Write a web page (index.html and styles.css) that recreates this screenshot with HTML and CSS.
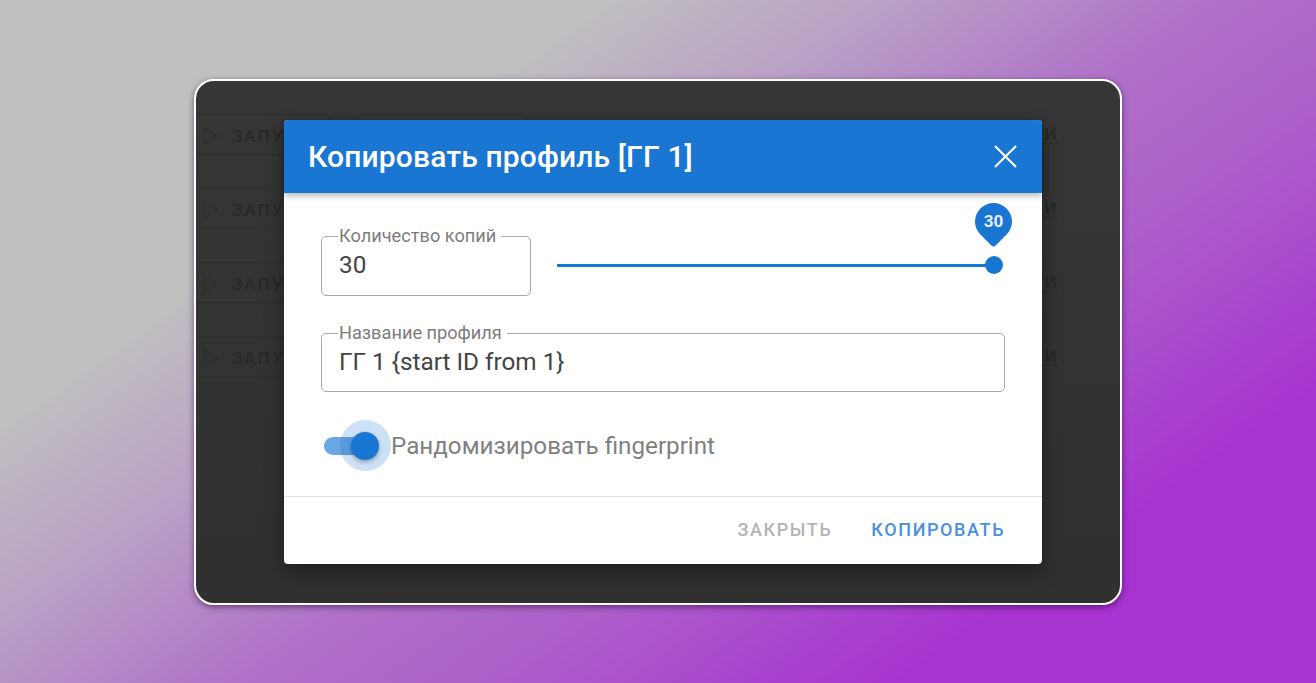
FILE: index.html
```html
<!DOCTYPE html>
<html lang="ru">
<head>
<meta charset="utf-8">
<title>Копировать профиль</title>
<link rel="stylesheet" href="styles.css">
</head>
<body>
<main class="window">
  <div class="rows">
    <div class="row"><div class="run"><svg class="play" viewBox="0 0 16 18"><path d="M1.5 1.5 L14.5 9 L1.5 16.5 Z"/></svg><span>ЗАПУ</span></div><div class="ghost"></div><span class="more">ТИ</span></div>
    <div class="row"><div class="run"><svg class="play" viewBox="0 0 16 18"><path d="M1.5 1.5 L14.5 9 L1.5 16.5 Z"/></svg><span>ЗАПУ</span></div><div class="ghost"></div><span class="more">ТИ</span></div>
    <div class="row"><div class="run"><svg class="play" viewBox="0 0 16 18"><path d="M1.5 1.5 L14.5 9 L1.5 16.5 Z"/></svg><span>ЗАПУ</span></div><div class="ghost"></div><span class="more">ТИ</span></div>
    <div class="row"><div class="run"><svg class="play" viewBox="0 0 16 18"><path d="M1.5 1.5 L14.5 9 L1.5 16.5 Z"/></svg><span>ЗАПУ</span></div><div class="ghost"></div><span class="more">ТИ</span></div>
  </div>
  <section class="dialog">
    <header class="dialog-head">
      <h1>Копировать профиль [ГГ 1]</h1>
      <svg class="close" viewBox="0 0 24 24"><path d="M1 1 L23 23 M23 1 L1 23"/></svg>
    </header>
    <div class="dialog-body">
      <div class="line">
        <fieldset class="field field-count">
          <legend>Количество копий</legend>
          <div class="value">30</div>
        </fieldset>
        <div class="slider">
          <div class="track"></div>
          <div class="thumb"></div>
          <div class="pin"><span>30</span></div>
        </div>
      </div>
      <fieldset class="field field-name">
        <legend>Название профиля</legend>
        <div class="value">ГГ 1 {start ID from 1}</div>
      </fieldset>
      <div class="toggle-line">
        <div class="toggle"><div class="toggle-track"></div><div class="toggle-halo"></div><div class="toggle-knob"></div></div>
        <span class="toggle-label">Рандомизировать fingerprint</span>
      </div>
    </div>
    <footer class="dialog-foot">
      <span class="btn btn-close">ЗАКРЫТЬ</span>
      <span class="btn btn-copy">КОПИРОВАТЬ</span>
    </footer>
  </section>
</main>
</body>
</html>
```
FILE: styles.css
```css
* { box-sizing: border-box; }
html, body { height: 100%; }
body {
  margin: 0;
  display: flex;
  align-items: center;
  justify-content: center;
  background: linear-gradient(145deg, #c0c0c0 26%, #b9a0c6 39%, #b071c8 53%, #ad5fca 64%, #a733d0 82%);
  font-family: Roboto, "Noto Sans", sans-serif;
  overflow: hidden;
}
.window {
  position: relative;
  width: 928px;
  height: 526px;
  margin-top: 1px;
  border: 2px solid #fff;
  border-radius: 20px;
  background: linear-gradient(#363636, #303030);
  box-shadow: 0 2px 6px rgba(40, 0, 60, .55);
  overflow: hidden;
}
.rows {
  display: flex;
  flex-direction: column;
  padding-top: 33px;
}
.row {
  display: flex;
  align-items: center;
  height: 74px;
  padding-bottom: 33px;
  flex: none;
}
.run {
  width: 142px;
  height: 41px;
  margin-left: -7px;
  display: flex;
  align-items: center;
  gap: 13px;
  padding: 2px 0 0 13px;
  flex: none;
  border: 1px solid #2b302b;
  border-radius: 5px;
  color: #262b26;
  font-size: 17px;
  font-weight: 500;
  letter-spacing: 2px;
  white-space: nowrap;
}
.play { width: 16px; height: 18px; flex: none; fill: none; stroke: #2b302b; stroke-width: 1.4; }
.ghost {
  width: 171px;
  height: 41px;
  margin-left: 25px;
  flex: none;
  border: 1px solid #2d312d;
  border-radius: 5px;
}
.more {
  margin-left: auto;
  margin-right: 62px;
  color: #272a27;
  font-size: 17px;
  font-weight: 500;
  letter-spacing: 1.5px;
  line-height: 18px;
  border-bottom: 1px dashed #272a27;
}
.dialog {
  position: absolute;
  left: 88px;
  top: 39px;
  width: 758px;
  height: 444px;
  display: flex;
  flex-direction: column;
  background: #fff;
  border-radius: 4px;
  box-shadow: 0 8px 20px rgba(0, 0, 0, .4);
}
.dialog-head {
  height: 73px;
  flex: none;
  display: flex;
  align-items: center;
  justify-content: space-between;
  padding: 0 25px 0 24px;
  background: #1976d2;
  border-radius: 4px 4px 0 0;
  box-shadow: 0 3px 6px rgba(0, 0, 0, .28);
  position: relative;
}
.dialog-head h1 {
  margin: 0;
  color: #fff;
  font-size: 30px;
  font-weight: 500;
  letter-spacing: .14px;
}
.close { width: 23px; height: 23px; stroke: #fff; stroke-width: 2.2; fill: none; }
.dialog-body {
  flex: 1;
  padding: 34px 37px 0;
  display: flex;
  flex-direction: column;
}
.line { display: flex; gap: 26px; height: 69px; flex: none; }
.field {
  margin: 0;
  padding: 0 8px 0 17px;
  border: 1px solid #a8a8a8;
  border-radius: 5px;
  min-width: 0;
  display: block;
}
.field legend {
  padding: 0 5px 0 1px;
  margin-left: -1px;
  font-size: 18.2px;
  line-height: 18px;
  color: #7d7d7d;
}
.value {
  font-size: 24.3px;
  line-height: 30px;
  color: #444;
  margin-top: 5px;
}
.field-count { width: 210px; height: 69px; flex: none; }
.slider { position: relative; flex: 1; margin-right: 2px; }
.track {
  position: absolute;
  left: 0;
  right: 9px;
  top: 37px;
  height: 3px;
  background: #1976d2;
}
.thumb {
  position: absolute;
  right: 0;
  top: 29px;
  width: 18px;
  height: 18px;
  border-radius: 50%;
  background: #1976d2;
}
.pin {
  position: absolute;
  right: -9px;
  top: -24px;
  width: 37px;
  height: 44px;
}
.pin::before {
  content: "";
  position: absolute;
  left: 0;
  top: 0;
  width: 37px;
  height: 37px;
  border-radius: 50% 50% 3px 50%;
  background: #1976d2;
  transform: rotate(45deg);
  transform-origin: 50% 50%;
}
.pin span {
  position: absolute;
  left: 0;
  right: 0;
  top: 7px;
  text-align: center;
  color: #e3eefa;
  font-size: 17px;
  line-height: 22px;
  font-weight: 700;
}
.field-name { height: 68px; margin-top: 28px; width: 684px; flex: none; }
.toggle-line { display: flex; align-items: center; margin-top: 22px; height: 60px; flex: none; }
.toggle { position: relative; width: 70px; height: 60px; flex: none; }
.toggle-track {
  position: absolute;
  left: 3px;
  top: 23px;
  width: 54px;
  height: 18px;
  border-radius: 9px;
  background: #6aa6e2;
}
.toggle-halo {
  position: absolute;
  left: 19px;
  top: 6px;
  width: 51px;
  height: 51px;
  border-radius: 50%;
  background: rgba(25, 118, 210, .22);
}
.toggle-knob {
  position: absolute;
  left: 30px;
  top: 18px;
  width: 28px;
  height: 28px;
  border-radius: 50%;
  background: #1976d2;
  box-shadow: 0 2px 4px rgba(0, 0, 0, .3);
}
.toggle-label { font-size: 24.2px; color: #808080; padding-top: 3px; }
.dialog-foot {
  height: 68px;
  flex: none;
  display: flex;
  align-items: center;
  justify-content: flex-end;
  gap: 39px;
  padding: 0 37px 2px 0;
  border-top: 1px solid #e0e0e0;
}
.btn { font-size: 18px; font-weight: 500; letter-spacing: 1.6px; }
.btn-close { color: #b4b4b4; }
.btn-copy { color: #4a90dd; }
```
